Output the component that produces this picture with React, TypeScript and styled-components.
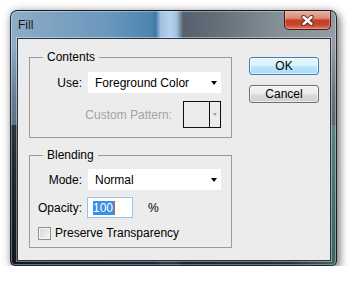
import React from "react";
import styled, { createGlobalStyle } from "styled-components";

const GlobalStyle = createGlobalStyle`
  html, body {
    margin: 0;
    padding: 0;
    background: #ffffff;
  }
  body {
    font-family: "Liberation Sans", Arial, sans-serif;
    font-size: 12px;
    color: #000;
  }
`;

const Page = styled.div`
  padding: 10px 0 0 10px;
`;

// glass frame of the win7 window
const Window = styled.div`
  box-sizing: border-box;
  width: 327px;
  height: 256px;
  display: flex;
  flex-direction: column;
  padding: 0 5px 4px 6px;
  border: 1px solid rgba(18, 26, 36, 0.9);
  border-radius: 7px 7px 5px 5px;
  background:
    linear-gradient(
        90deg,
        rgba(0, 0, 0, 0.55) 0%,
        rgba(0, 0, 0, 0.2) 30%,
        rgba(0, 0, 0, 0) 55%,
        rgba(60, 140, 120, 0) 85%,
        rgba(90, 170, 140, 0.45) 100%
      )
      left bottom / 100% 55% no-repeat,
    linear-gradient(
      180deg,
      rgba(0, 0, 0, 0) 0%,
      rgba(0, 0, 0, 0) 14%,
      rgba(18, 30, 46, 0.3) 32%,
      rgba(12, 20, 34, 0.65) 75%,
      rgba(12, 20, 34, 0.8) 100%
    ),
    linear-gradient(
      90deg,
      #8fadc6 0%,
      #7fa3c1 12%,
      #6a98bd 30%,
      #4c85b0 43%,
      #3e79a6 44.5%,
      #9fc0e2 46%,
      #b6d2ee 49%,
      #a2bfdc 51%,
      #56616d 53%,
      #66717c 65%,
      #858f98 82%,
      #939ba3 100%
    );
  box-shadow:
    inset 0 0 0 1px rgba(255, 255, 255, 0.35),
    3px 4px 9px rgba(0, 0, 0, 0.45),
    0 0 10px rgba(0, 0, 0, 0.22);
`;

const TitleBar = styled.div`
  height: 27px;
  display: flex;
  justify-content: space-between;
  align-items: flex-start;
`;

const Title = styled.div`
  margin: 7px 0 0 1px;
  font-family: "Liberation Sans", Arial, sans-serif;
  font-size: 12px;
  line-height: 14px;
  color: #101820;
`;

const CloseButton = styled.div`
  box-sizing: border-box;
  width: 47px;
  height: 19px;
  display: flex;
  align-items: center;
  justify-content: center;
  border: 1px solid #4a1a12;
  border-top: none;
  border-radius: 0 0 5px 5px;
  background: linear-gradient(
    180deg,
    #eab3a4 0%,
    #d98a75 40%,
    #c53e24 52%,
    #c2452c 75%,
    #db7d62 100%
  );
  box-shadow: inset 0 0 0 1px rgba(255, 210, 200, 0.35);
`;

const Client = styled.div`
  flex: 1;
  display: flex;
  padding: 11px 0 0 11px;
  border: 1px solid #27333f;
  background: #ececec;
  box-shadow: 0 0 0 1px rgba(255, 255, 255, 0.4);
`;

const Groups = styled.div`
  width: 203px;
  display: flex;
  flex-direction: column;
  gap: 10px;
`;

const Group = styled.fieldset<{ $h: number }>`
  box-sizing: border-box;
  width: 203px;
  height: ${(p) => p.$h}px;
  margin: 0;
  padding: 0;
  border: 1px solid #9b9b9b;
  min-inline-size: 0;
`;

const Legend = styled.legend`
  margin-left: 13px;
  padding: 0 4px;
  font-size: 12px;
  line-height: 14px;
`;

const GroupBody = styled.div<{ $top: number }>`
  display: flex;
  flex-direction: column;
  padding: ${(p) => p.$top}px 10px 0 8px;
`;

const Row = styled.div<{ $gap: number; $mt?: number; $end?: boolean }>`
  display: flex;
  align-items: center;
  gap: ${(p) => p.$gap}px;
  margin-top: ${(p) => p.$mt || 0}px;
  justify-content: ${(p) => (p.$end ? "flex-end" : "flex-start")};
`;

const Label = styled.span<{ $w?: number; $muted?: boolean }>`
  width: ${(p) => (p.$w ? `${p.$w}px` : "auto")};
  text-align: right;
  color: ${(p) => (p.$muted ? "#a3a3a3" : "#000")};
  line-height: 14px;
  white-space: nowrap;
`;

const Dropdown = styled.div`
  box-sizing: border-box;
  width: 133px;
  height: 21px;
  display: flex;
  align-items: center;
  justify-content: space-between;
  padding: 0 4px 0 7px;
  background: #ffffff;
`;

const Arrow = styled.span<{ $color?: string; $size?: number }>`
  width: 0;
  height: 0;
  border-left: ${(p) => p.$size || 3.5}px solid transparent;
  border-right: ${(p) => p.$size || 3.5}px solid transparent;
  border-top: ${(p) => (p.$size || 3.5) + 0.5}px solid ${(p) => p.$color || "#000"};
`;

const Swatch = styled.div`
  box-sizing: border-box;
  width: 38px;
  height: 27px;
  display: grid;
  grid-template-columns: 1fr 11px;
  border: 1px solid #111;
  background: #ececec;
`;

const SwatchArrow = styled.div`
  border-left: 1px solid #111;
  display: flex;
  align-items: center;
  justify-content: center;
`;

const NumberBox = styled.div`
  box-sizing: border-box;
  width: 46px;
  height: 21px;
  display: flex;
  align-items: center;
  padding-left: 5px;
  border: 1px solid #9cc2e6;
  background: #ffffff;
`;

const Selected = styled.span`
  background: #3a8fe8;
  color: #ffffff;
  line-height: 14px;
  padding-right: 0.5px;
`;

const Caret = styled.span`
  width: 1px;
  height: 14px;
  background: #c8661a;
`;

const Percent = styled.span`
  margin-left: 10px;
`;

const CheckBox = styled.span`
  box-sizing: border-box;
  width: 13px;
  height: 13px;
  border: 1px solid #8e8f8f;
  background: linear-gradient(135deg, #d6d6d6 0%, #f4f4f4 100%);
  box-shadow: inset 0 0 0 1px #f6f6f6;
`;

const Buttons = styled.div`
  display: flex;
  flex-direction: column;
  gap: 10px;
  margin: 7px 0 0 17px;
`;

const Button = styled.div<{ $default?: boolean }>`
  box-sizing: border-box;
  width: 70px;
  height: 18px;
  display: flex;
  align-items: center;
  justify-content: center;
  border: 1px solid ${(p) => (p.$default ? "#3c7fb1" : "#707070")};
  border-radius: 3px;
  background: ${(p) =>
    p.$default
      ? "linear-gradient(180deg, #eaf6fd 0%, #d9f0fc 50%, #bee6fd 51%, #a7d9f5 100%)"
      : "linear-gradient(180deg, #f2f2f2 0%, #ebebeb 50%, #dddddd 51%, #cfcfcf 100%)"};
  box-shadow: inset 0 0 0 1px rgba(255, 255, 255, 0.6);
  line-height: 14px;
`;

function CloseGlyph() {
  return (
    <svg width="13" height="11" viewBox="0 0 13 11">
      <path
        d="M2.5 2 L10.5 9 M10.5 2 L2.5 9"
        stroke="#5a2018"
        strokeWidth="4.2"
        strokeLinecap="round"
        fill="none"
      />
      <path
        d="M2.5 2 L10.5 9 M10.5 2 L2.5 9"
        stroke="#ffffff"
        strokeWidth="2.4"
        strokeLinecap="round"
        fill="none"
      />
    </svg>
  );
}

export default function App() {
  return (
    <>
      <GlobalStyle />
      <Page>
        <Window>
          <TitleBar>
            <Title>Fill</Title>
            <CloseButton>
              <CloseGlyph />
            </CloseButton>
          </TitleBar>
          <Client>
            <Groups>
              <Group $h={88}>
                <Legend>Contents</Legend>
                <GroupBody $top={8}>
                  <Row $gap={6}>
                    <Label $w={44}>Use:</Label>
                    <Dropdown>
                      <span>Foreground Color</span>
                      <Arrow />
                    </Dropdown>
                  </Row>
                  <Row $gap={11} $mt={8} $end>
                    <Label $muted>Custom Pattern:</Label>
                    <Swatch>
                      <span />
                      <SwatchArrow>
                        <Arrow $color="#a0a0a0" $size={2.5} />
                      </SwatchArrow>
                    </Swatch>
                  </Row>
                </GroupBody>
              </Group>
              <Group $h={100}>
                <Legend>Blending</Legend>
                <GroupBody $top={7}>
                  <Row $gap={6}>
                    <Label $w={44}>Mode:</Label>
                    <Dropdown>
                      <span>Normal</span>
                      <Arrow />
                    </Dropdown>
                  </Row>
                  <Row $gap={5} $mt={7}>
                    <Label $w={44}>Opacity:</Label>
                    <NumberBox>
                      <Selected>100</Selected>
                      <Caret />
                    </NumberBox>
                    <Percent>%</Percent>
                  </Row>
                  <Row $gap={4} $mt={8}>
                    <CheckBox />
                    <Label>Preserve Transparency</Label>
                  </Row>
                </GroupBody>
              </Group>
            </Groups>
            <Buttons>
              <Button $default>OK</Button>
              <Button>Cancel</Button>
            </Buttons>
          </Client>
        </Window>
      </Page>
    </>
  );
}
